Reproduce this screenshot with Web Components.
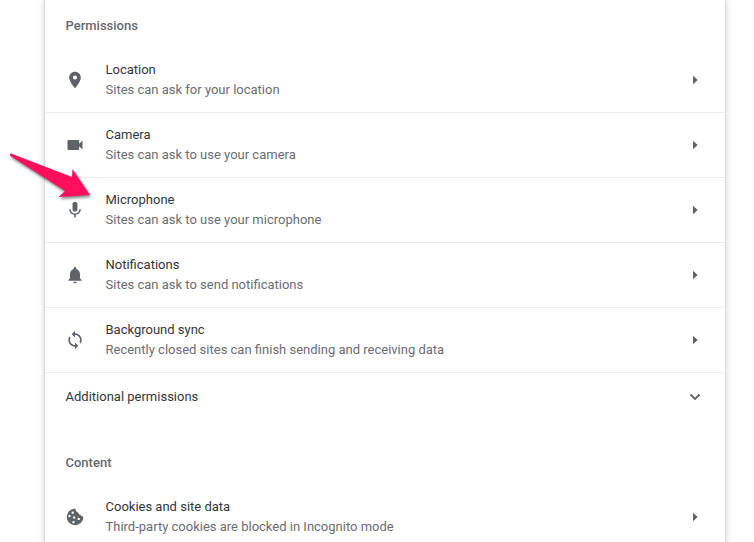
<!DOCTYPE html>
<html lang="en">
<head>
<meta charset="utf-8">
<title>Site settings</title>
<style>
  html, body {
    height: 100%;
  }
  body {
    margin: 0;
    overflow: hidden;
    background: #fff;
    font-family: Roboto, "Liberation Sans", sans-serif;
    font-size: 13px;
    line-height: 20px;
    color: #333639;
  }
</style>
</head>
<body>
<settings-card>
  <settings-heading>Permissions</settings-heading>
  <settings-row icon="location">Location<span slot="sub">Sites can ask for your location</span></settings-row>
  <settings-row icon="camera" line>Camera<span slot="sub">Sites can ask to use your camera</span></settings-row>
  <settings-row icon="mic" line>Microphone<span slot="sub">Sites can ask to use your microphone</span></settings-row>
  <settings-row icon="bell" line>Notifications<span slot="sub">Sites can ask to send notifications</span></settings-row>
  <settings-row icon="sync" line>Background sync<span slot="sub">Recently closed sites can finish sending and receiving data</span></settings-row>
  <settings-expander>Additional permissions</settings-expander>
  <settings-heading class="content">Content</settings-heading>
  <settings-row icon="cookie">Cookies and site data<span slot="sub">Third-party cookies are blocked in Incognito mode</span></settings-row>
</settings-card>
<callout-arrow></callout-arrow>

<script>
const ICONS = {
  location: '<path d="M12 2C8.13 2 5 5.13 5 9c0 5.25 7 13 7 13s7-7.75 7-13c0-3.87-3.13-7-7-7zm0 9.500a2.500 2.500 0 1 1 0-5 2.500 2.500 0 0 1 0 5z"/>',
  camera: '<path d="M17 10.500V7c0-.55-.45-1-1-1H4c-.55 0-1 .45-1 1v10c0 .55.45 1 1 1h12c.55 0 1-.45 1-1v-3.500l4 4v-11l-4 4z"/>',
  mic: '<path d="M12 14c1.660 0 2.990-1.340 2.990-3L15 5c0-1.660-1.340-3-3-3S9 3.340 9 5v6c0 1.660 1.340 3 3 3zm5.300-3c0 3-2.540 5.100-5.300 5.100S6.700 14 6.700 11H5c0 3.410 2.720 6.230 6 6.720V21h2v-3.280c3.280-.48 6-3.300 6-6.720h-1.700z"/>',
  bell: '<path d="M12 22c1.100 0 2-.9 2-2h-4c0 1.100.9 2 2 2zm6-6v-5c0-3.070-1.640-5.640-4.500-6.320V4c0-.83-.67-1.500-1.500-1.500s-1.500.67-1.500 1.500v.68C7.630 5.360 6 7.920 6 11v5l-2 2v1h16v-1l-2-2z"/>',
  sync: '<path d="M12 4V1L8 5l4 4V6c3.310 0 6 2.690 6 6 0 1.010-.25 1.970-.7 2.800l1.460 1.460A7.930 7.930 0 0 0 20 12c0-4.420-3.580-8-8-8zm0 14c-3.310 0-6-2.690-6-6 0-1.010.25-1.970.7-2.800L5.240 7.740A7.930 7.930 0 0 0 4 12c0 4.420 3.580 8 8 8v3l4-4-4-4v3z"/>',
  cookie: '<path fill-rule="evenodd" d="M12.800 2A10 10 0 1 0 22 11.300c-1.400.3-2.800-.5-3.200-1.900-1.600.2-2.800-1-2.700-2.600-2.200-.1-3.700-2.400-3.300-4.800zM9.200 5.400a1.400 1.400 0 1 1 0 2.800 1.400 1.400 0 0 1 0-2.800zM5.400 9.400a1.400 1.400 0 1 1 0 2.800 1.400 1.400 0 0 1 0-2.800zM11 11.200a1.400 1.400 0 1 1 0 2.800 1.400 1.400 0 0 1 0-2.800zM16.500 12.900a1.400 1.400 0 1 1 0 2.800 1.400 1.400 0 0 1 0-2.800zM10.200 16.800a1.400 1.400 0 1 1 0 2.800 1.400 1.400 0 0 1 0-2.800z"/>'
};

class SettingsCard extends HTMLElement {
  constructor() {
    super();
    this.attachShadow({ mode: "open" }).innerHTML = `
      <style>
        :host {
          display: block;
          box-sizing: border-box;
          width: 680px;
          height: 600px;
          margin-left: 45px;
          padding-top: 16px;
          background: #fff;
          box-shadow: 0 0 2px 0 rgba(60, 64, 67, .3), 0 0 6px 2px rgba(60, 64, 67, .15);
        }
      </style>
      <slot></slot>
    `;
  }
}

class SettingsHeading extends HTMLElement {
  constructor() {
    super();
    this.attachShadow({ mode: "open" }).innerHTML = `
      <style>
        :host {
          display: block;
          padding: 0 20.500px 12px;
          font-weight: 500;
          color: #66696e;
        }
        :host(.content) {
          padding-top: 32px;
        }
      </style>
      <slot></slot>
    `;
  }
}

class SettingsRow extends HTMLElement {
  constructor() {
    super();
    this.attachShadow({ mode: "open" });
  }

  connectedCallback() {
    const icon = ICONS[this.getAttribute("icon")] || "";
    this.shadowRoot.innerHTML = `
      <style>
        :host {
          display: flex;
          align-items: center;
          height: 64px;
          padding: 0 20px;
        }
        :host([line]) {
          border-top: 1px solid #ebebeb;
        }
        svg {
          flex: none;
          width: 20px;
          height: 20px;
          fill: #5f6368;
        }
        .text {
          flex: 1;
          margin-left: 20.500px;
        }
        .sub {
          color: #6a6d72;
        }
      </style>
      <svg viewBox="0 0 24 24">${icon}</svg>
      <div class="text">
        <div><slot></slot></div>
        <div class="sub"><slot name="sub"></slot></div>
      </div>
      <svg viewBox="0 0 20 20"><path d="M8 5.800l4.700 4.200L8 14.200z"/></svg>
    `;
  }
}

class SettingsExpander extends HTMLElement {
  constructor() {
    super();
    this.attachShadow({ mode: "open" }).innerHTML = `
      <style>
        :host {
          display: flex;
          align-items: center;
          justify-content: space-between;
          height: 48px;
          padding: 0 20px 0 20.500px;
          border-top: 1px solid #ebebeb;
        }
        svg {
          width: 20px;
          height: 20px;
          fill: #5f6368;
        }
      </style>
      <span><slot></slot></span>
      <svg viewBox="0 0 24 24"><path d="M16.590 8.200L12 12.800 7.410 8.200 5.800 9.800l6.200 6.200 6.200-6.200z"/></svg>
    `;
  }
}

// pink pointer lying over the page
class CalloutArrow extends HTMLElement {
  constructor() {
    super();
    this.attachShadow({ mode: "open" }).innerHTML = `
      <style>
        :host {
          position: absolute;
          left: 0;
          top: 140px;
        }
        svg {
          display: block;
          filter: drop-shadow(1px 2px 1.500px rgba(0, 0, 0, .5));
        }
      </style>
      <svg width="100" height="70" viewBox="0 140 100 70">
        <path d="M11 153.500L72 177 72.500 169 90 195 58.500 197 65 191 10.500 156Q9 154 11 153.500z" fill="#ff0f5b"/>
      </svg>
    `;
  }
}

customElements.define("settings-card", SettingsCard);
customElements.define("settings-heading", SettingsHeading);
customElements.define("settings-row", SettingsRow);
customElements.define("settings-expander", SettingsExpander);
customElements.define("callout-arrow", CalloutArrow);
</script>
</body>
</html>
